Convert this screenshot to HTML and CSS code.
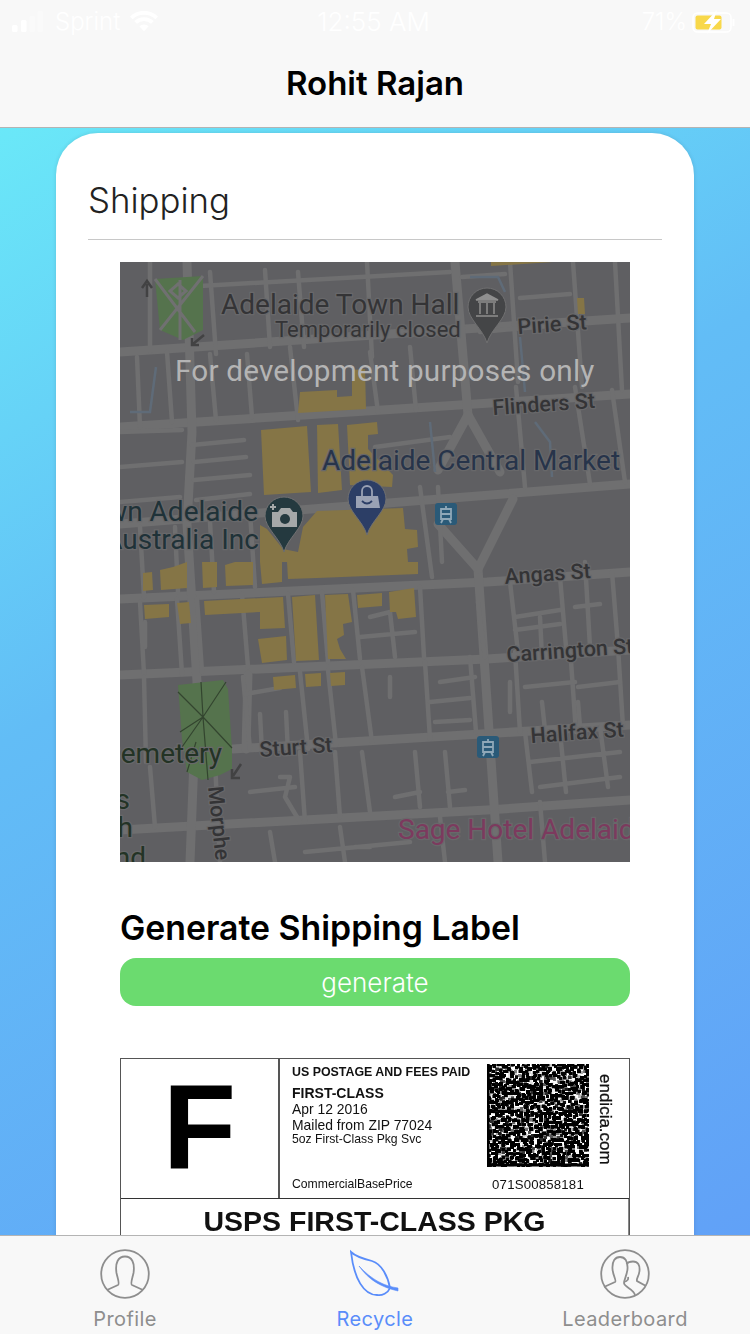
FILE: index.html
```html
<!DOCTYPE html>
<html lang="en">
<head>
<meta charset="utf-8">
<title>Shipping</title>
<link rel="stylesheet" href="styles.css">
</head>
<body>
<div class="screen">
  <header class="topbar">
    <div class="status">
      <div class="status-left">
        <svg class="signal" width="34" height="24" viewBox="0 0 34 24"><rect x="1" y="15" width="5.500" height="7" rx="1.500" fill="#fff"/><rect x="10" y="10" width="5.500" height="12" rx="1.500" fill="#fff"/><rect x="18.500" y="6" width="5.500" height="16" rx="1.500" fill="#fff" opacity=".35"/><rect x="26.500" y="1" width="5.500" height="21" rx="1.500" fill="#fff" opacity=".35"/></svg>
        <span class="carrier">Sprint</span>
        <svg class="wifi" width="28" height="22" viewBox="0 0 30 22"><path d="M15 21 10 15.500a7.500 7.500 0 0 1 10 0zM7.500 13 4.500 10a15.500 15.500 0 0 1 21 0l-3 3a11 11 0 0 0-15 0zM2.800 8 0 5a22 22 0 0 1 30 0l-2.800 3a18 18 0 0 0-24.400 0z" fill="#fff"/></svg>
      </div>
      <span class="clock">12:55 AM</span>
      <div class="status-right">
        <span class="percent">71%</span>
        <svg class="battery" width="44" height="24" viewBox="0 0 44 24"><rect x="1" y="3" width="38" height="19" rx="4.500" fill="none" stroke="#fff" stroke-width="1.500"/><rect x="3.500" y="5.500" width="26" height="14" rx="2" fill="#f8d84a"/><path d="M41.500 9v7" stroke="#fff" stroke-width="2"/><path d="M25 0 12 14h7l-4 10 14-15h-7z" fill="#fff"/></svg>
      </div>
    </div>
    <h1 class="nav-title">Rohit Rajan</h1>
  </header>

  <main class="content">
    <section class="card">
      <h2 class="card-title">Shipping</h2>
      <div class="card-body">
        <svg class="map" width="510" height="600" viewBox="0 0 510 600" role="img" aria-label="Map of central Adelaide">
          <defs>
            <path id="pin" d="M-19 0A19 19 0 1 1 19 0C19 12 4 22 0 36C-4 22-19 12-19 0Z"/>
            <clipPath id="mapclip"><rect width="510" height="600"/></clipPath>
          </defs>
          <g clip-path="url(#mapclip)">
          <rect class="m-ground" width="510" height="600"/>
          <g class="m-road m-major">
            <path d="M0 90 510 56M0 165 510 132M0 262 510 222M0 337 367 320 510 310M0 413 367 397 510 388M113 487 510 463M0 568 367 548 510 538"/>
            <path d="M67 0 72 170 67 262 77 420 70 600M335 0 348 153M358 307 378 600M128 413 126 487"/>
            <path d="M348 153 318 208M348 153 380 210M318 262 358 307M393 237 358 307"/>
          </g>
          <g class="m-road m-minor">
            <path d="M30 0 30 90M90 10 96 92M145 8 150 85M178 10 184 85M247 0 252 95M390 0 398 120M453 0 462 125M495 0 502 128"/>
            <path d="M17 95 20 165M47 90 52 160M90 92 96 158M127 92 132 155M170 85 178 158M250 90 258 150M290 85 296 148M396 125 405 225M455 125 470 222M492 128 505 220"/>
            <path d="M0 170 62 168M0 205 62 200M72 183 124 178M74 200 126 195M74 218 130 213M0 240 60 235M76 238 130 232M80 24 330 10M342 15 385 12M360 70 450 62M400 36 450 32M255 185 330 175"/>
            <path d="M20 265 24 335M55 265 58 330M90 260 94 330M130 250 135 325M300 225 312 315M318 225 322 300"/>
            <path d="M20 340 24 412M57 337 62 412M77 337 82 410M122 332 128 405M168 332 174 400M202 330 208 400M233 328 240 397M300 325 304 395M250 355 270 350M240 375 295 370M270 350 275 395"/>
            <path d="M358 340 365 395M390 320 398 390M440 315 446 385M492 310 498 385M395 355 440 348M395 368 440 362M455 345 480 342M465 300 470 385"/>
            <path d="M24 415 26 500M123 415 130 487M180 410 188 487M208 408 216 483M242 405 252 480M305 400 310 477M350 395 356 470M395 390 400 470M450 385 456 470M498 385 503 465"/>
            <path d="M140 452 142 490M166 450 168 490M270 415 270 435M25 360 25 385M420 355 422 395M390 420 390 450M422 440 425 468M458 440 460 465M125 432 160 426M405 425 455 420M458 425 500 420M320 420 355 415M310 440 350 436M315 460 350 458"/>
            <path d="M30 505 35 565M95 500 100 600M180 490 185 560M215 490 220 555M242 490 250 550M295 490 300 545M325 490 330 545M405 470 412 530M440 470 446 530M480 465 488 525M130 530 175 525M160 515 170 515 165 535 180 560M275 535 300 530M328 530 345 528M410 500 500 490M420 525 500 515"/>
            <path d="M150 570 155 600M220 565 225 600M320 555 325 600M420 540 425 600M185 590 290 580M235 585 250 585"/>
          </g>
          <g class="m-water">
            <path d="M10 150H30L36 105M350 15H378L385 30M400 75 405 130M415 160 430 180 432 215M310 160 315 210"/>
          </g>
          <g class="m-building">
            <path d="M180 130 217 128 217 135 232 134 232 108 245 107 246 147 178 151Z"/>
            <path d="M141 168 187 164 191 230 144 233Z"/>
            <path d="M197 163 218 162 222 228 198 231Z"/>
            <path d="M227 163 257 160 258 172 248 173 248 187 273 213 272 225 230 223Z"/>
            <path d="M197 249 283 246 285 267 297 268 298 285 287 287 288 300 140 300 140 263 147 267 163 287 178 290 183 265Z"/>
            <path d="M167 300 298 300 298 312 197 316 168 317Z"/>
            <path d="M140 300 162 300 162 320 142 322Z"/>
            <path d="M105 303 115 300 133 300 133 323 106 324Z"/>
            <path d="M82 300 97 300 97 325 83 326Z"/>
            <path d="M40 308 53 305 67 300 67 326 41 328Z"/>
            <path d="M23 311 32 310 33 328 23 329Z"/>
            <path d="M24 343 49 342 49 355 25 357Z"/>
            <path d="M57 341 69 340 71 361 60 362Z"/>
            <path d="M84 339 163 335 165 366 140 367 140 350 85 353Z"/>
            <path d="M138 377 166 374 167 398 142 401Z"/>
            <path d="M172 335 195 333 199 398 176 399Z"/>
            <path d="M205 333 228 332 232 360 223 362 224 373 217 377 220 387 226 397 208 397Z"/>
            <path d="M237 333 262 331 262 344 238 346Z"/>
            <path d="M269 330 294 326 296 355 278 357 276 350 270 350Z"/>
            <path d="M153 415 175 413 176 426 154 428Z"/>
            <path d="M185 412 201 411 201 424 186 425Z"/>
            <path d="M210 411 225 410 225 423 211 424Z"/>
            <path d="M371 0 433 0 371 4Z"/>
            <path d="M457 36 464 36 465 52 458 52Z"/>
          </g>
          <path class="m-park" d="M35 17 83 14 83 68 63 78 40 68Z"/>
          <path class="m-park-line" d="M35 17 75 70M83 14 40 68M60 18V78M58 22 66 29 58 36 50 29Z"/>
          <path class="m-park" d="M58 423 103 418 108 427 112 487 112 507 100 513 82 518 67 510 62 477Z"/>
          <path class="m-park-dark" d="M58 430 83 455 112 486M106 420 83 455 62 485M81 420 83 455 88 518M60 470 83 455M67 510 76 480"/>
          <path class="m-arrow" d="M27 35V22M22 26 27 19 32 26"/>
          <path class="m-arrow" d="M84 73 73 82M72 76V83H79"/>
          <path class="m-arrow" d="M121 502 113 514M112 507V516H120"/>
          <use href="#pin" x="367" y="45" class="p-grey"/>
          <use href="#pin" x="164" y="254" class="p-teal"/>
          <use href="#pin" x="247" y="237" class="p-navy"/>
          <path class="p-glyph-light" d="M356 38H378L367 32ZM358 40H376M360 41V52M367 41V52M374 41V52M356 54H378"/>
          <path class="p-fill-light" d="M152 250H158L161 246H170L173 250H177V265H152Z"/>
          <path class="p-plus" d="M150 245H156M153 242V248"/>
          <circle class="p-dot" cx="165" cy="257" r="5"/>
          <path class="p-fill-light2" d="M236 234H258L260 246H236Z"/>
          <path class="p-bag-line" d="M242 234V229A5 5 0 0 1 252 229V234"/>
          <path class="p-bag-smile" d="M242 239Q247 244 252 239"/>
          <rect class="m-transit" x="315" y="241" width="22" height="22" rx="3"/>
          <rect class="m-transit" x="357" y="474" width="22" height="22" rx="3"/>
          <path class="m-transit-line" d="M321 247H331V257H321ZM321 252H331M323 257 321 261M329 257 331 261M326 244V247"/>
          <path class="m-transit-line" d="M363 480H373V490H363ZM363 485H373M365 490 363 494M371 490 373 494M368 477V480"/>
          <g class="m-label">
            <text class="t-lg" x="101" y="52">Adelaide Town Hall</text>
            <text class="t-sm" x="155" y="75">Temporarily closed</text>
            <text class="t-st" x="398" y="72" transform="rotate(-4 398 72)">Pirie St</text>
            <text class="t-st" x="373" y="153" transform="rotate(-4 373 153)">Flinders St</text>
            <text class="t-st" x="385" y="322" transform="rotate(-4 385 322)">Angas St</text>
            <text class="t-st" x="387" y="400" transform="rotate(-4 387 400)">Carrington St</text>
            <text class="t-st" x="411" y="481" transform="rotate(-4 411 481)">Halifax St</text>
            <text class="t-st" x="140" y="495" transform="rotate(-4 140 495)">Sturt St</text>
            <text class="t-lg t-navy" x="202" y="208">Adelaide Central Market</text>
            <text class="t-lg t-teal" x="138" y="259" text-anchor="end">Town Adelaide</text>
            <text class="t-lg t-teal" x="139" y="287" text-anchor="end">Australia Inc</text>
            <text class="t-lg t-green" x="102" y="501" text-anchor="end">Cemetery</text>
            <text class="t-lg t-green" x="10" y="547" text-anchor="end">s</text>
            <text class="t-lg t-green" x="13" y="575" text-anchor="end">h</text>
            <text class="t-lg t-green" x="26" y="605" text-anchor="end">nd</text>
            <text class="t-st" x="88" y="525" transform="rotate(84 88 525)">Morphe</text>
            <text class="t-lg t-plum" x="278" y="577">Sage Hotel Adelaide</text>
          </g>
          <text class="t-dev" x="55" y="119">For development purposes only</text>
          </g>
        </svg>

        <h3 class="gen-title">Generate Shipping Label</h3>
        <button class="gen-btn" type="button">generate</button>

        <div class="label">
          <div class="label-top">
            <div class="label-letter">F</div>
            <div class="label-info">
              <div class="info-text">
                <div class="info-paid">US POSTAGE AND FEES PAID</div>
                <div class="info-class">FIRST-CLASS</div>
                <div class="info-line">Apr 12 2016</div>
                <div class="info-line">Mailed from ZIP 77024</div>
                <div class="info-small">5oz First-Class Pkg Svc</div>
                <div class="info-price">CommercialBasePrice</div>
              </div>
              <div class="info-code">
                <svg class="matrix" width="102" height="103" viewBox="0 0 102 103">
                  <defs>
                    <filter id="noise" x="0" y="0" width="100%" height="100%" filterUnits="objectBoundingBox" color-interpolation-filters="sRGB">
                      <feTurbulence type="fractalNoise" baseFrequency="0.45" numOctaves="1" seed="11" result="n"/>
                      <feColorMatrix in="n" values="0 0 0 0 0  0 0 0 0 0  0 0 0 0 0  12 0 0 0 -6.600" result="t"/>
                      <feFlood x="0" y="0" width="1" height="1" flood-color="#000" result="d"/>
                      <feTile in="d" x="0" y="0" width="2" height="2"/>
                      <feTile x="0" y="0" width="102" height="103" result="g"/>
                      <feComposite in="t" in2="g" operator="in"/>
                      <feMorphology operator="dilate" radius="1"/>
                    </filter>
                  </defs>
                  <rect width="102" height="103" fill="#fff"/>
                  <rect width="102" height="103" filter="url(#noise)"/>
                  <path d="M1 0V103M0 101H102" stroke="#000" stroke-width="3" fill="none"/>
                  <path d="M0 1H102M101 0V103" stroke="#000" stroke-width="2.500" stroke-dasharray="2.500 2.500" fill="none"/>
                </svg>
                <div class="code-num">071S00858181</div>
              </div>
              <div class="info-brand">endicia.com</div>
            </div>
          </div>
          <div class="label-service">USPS FIRST-CLASS PKG</div>
        </div>
      </div>
    </section>
  </main>

  <nav class="tabbar">
    <div class="tab">
      <svg class="tab-icon" width="50" height="50" viewBox="0 0 50 50" fill="none" stroke="#8e8e8e" stroke-width="1.800"><circle cx="25" cy="25" r="23.800"/><path d="M7 41 18 36C20 35 17.500 29 16.500 24 15 14 18 7.500 25 7.500S35 14 33.500 24C32.500 29 30 35 32 36L43 41"/></svg>
      <span class="tab-name">Profile</span>
    </div>
    <div class="tab tab-active">
      <svg class="tab-icon" width="50" height="50" viewBox="0 0 50 50" fill="none" stroke="#5a8dfa" stroke-width="1.800"><path d="M1 3C6 8 14 10 22 12 32 15 38 28 40 39 38 44 32 47 27 46 14 46 4 30 1 3Z"/><path d="M9 17C18 30 30 38 48 42L48 39C34 37 22 31 9 17Z" fill="#5a8dfa" stroke-width=".6"/></svg>
      <span class="tab-name">Recycle</span>
    </div>
    <div class="tab">
      <svg class="tab-icon" width="50" height="50" viewBox="0 0 50 50" fill="none" stroke="#8e8e8e" stroke-width="1.800"><circle cx="25" cy="25" r="23.800"/><path d="M4 38 15 33C17 32 13 27 12.500 20 12 12 15 8 20 8S28 12 27.500 20C27 26 24 31 24 34 24 38 34 40 35 46"/><path d="M26.500 15C28 13 30 12.500 33 12.500 38 12.500 40 16 39.500 22 39 27 36 30 37 32L46 37M24 33C28 32 28.500 30 28 28"/></svg>
      <span class="tab-name">Leaderboard</span>
    </div>
  </nav>
</div>
</body>
</html>
```

FILE: styles.css
```css
* { box-sizing: border-box; }
html, body { margin: 0; padding: 0; }
body { width: 750px; height: 1334px; overflow: hidden; font-family: Inter, "Liberation Sans", sans-serif; }
.screen { width: 750px; height: 1334px; display: flex; flex-direction: column; overflow: hidden; }

.topbar { flex: 0 0 128px; background: #f8f8f8; border-bottom: 1px solid #b4b4b4; }
.status { height: 40px; padding: 3px 14px 0 11px; display: grid; grid-template-columns: 1fr auto 1fr; align-items: center; color: #fff; font-size: 24px; font-weight: 300; }
.status-left { display: flex; align-items: center; gap: 10px; }
.clock { text-align: center; font-size: 26px; }
.status-right { display: flex; align-items: center; justify-content: flex-end; gap: 5px; }
.nav-title { margin: 0; height: 87px; display: flex; align-items: center; justify-content: center; padding-bottom: 2px; font-size: 33px; font-weight: 600; color: #000; }

.content { flex: 1; min-height: 0; overflow: hidden; padding: 5px 56px 0; background: linear-gradient(150deg, #6ae8f8 0%, #62bdf6 40%, #61a1f7 100%); }
.card { background: #fff; border-radius: 42px 42px 0 0; padding: 0 32px; height: 1400px; box-shadow: 0 0 4px rgba(0, 0, 0, .12); }
.card-title { margin: 0; height: 107px; padding: 46px 0 0; border-bottom: 1px solid #c8c8c8; font-size: 34.800px; font-weight: 300; line-height: 42px; color: #222; }
.card-body { padding: 22px 32px 0; }
.map { display: block; }

.m-ground { fill: #5f5f62; }
.m-road { fill: none; stroke: #6f6f70; stroke-linecap: round; stroke-linejoin: round; }
.m-major { stroke-width: 9; }
.m-minor { stroke-width: 4.500; }
.m-water { fill: none; stroke: #5f6b78; stroke-width: 2.500; }
.m-building { fill: #857546; }
.m-park { fill: #55734d; }
.m-park-line { fill: none; stroke: #707071; stroke-width: 3; }
.m-park-dark { fill: none; stroke: #33452f; stroke-width: 1.200; }
.m-arrow { fill: none; stroke: #424243; stroke-width: 2.500; }
.p-grey { fill: #444547; stroke: #707071; stroke-width: 1; }
.p-teal { fill: #24393f; stroke: #707071; stroke-width: 1; }
.p-navy { fill: #2c3e66; stroke: #707071; stroke-width: 1; }
.p-glyph-light { fill: #8f8f8f; stroke: #8f8f8f; stroke-width: 1.500; }
.p-fill-light { fill: #a5a8a9; }
.p-plus { fill: none; stroke: #a5a8a9; stroke-width: 2; }
.p-dot { fill: #24393f; }
.p-fill-light2 { fill: #9aa2b5; }
.p-bag-line { fill: none; stroke: #9aa2b5; stroke-width: 1.800; }
.p-bag-smile { fill: none; stroke: #2c3e66; stroke-width: 1.800; }
.m-transit { fill: #2a5a78; }
.m-transit-line { fill: none; stroke: #8fa8b8; stroke-width: 1.800; }
.m-label text { font-family: Roboto, sans-serif; fill: #343436; stroke: #68686a; stroke-width: 2.500; paint-order: stroke; }
.m-label .t-lg { font-size: 28px; }
.m-label .t-sm { font-size: 22px; }
.m-label .t-st { font-size: 21.500px; font-weight: 500; }
.m-label .t-navy { fill: #27344a; }
.m-label .t-teal { fill: #1f3238; }
.m-label .t-green { fill: #233325; }
.m-label .t-plum { fill: #7c3a5e; }
.t-dev { font-family: Roboto, sans-serif; font-size: 29.700px; fill: #b4b4b4; letter-spacing: .2px; }

.gen-title { margin: 47px 0 0; height: 38px; font-size: 33.800px; line-height: 38px; font-weight: 600; color: #000; white-space: nowrap; }
.gen-btn { display: block; width: 100%; height: 48px; margin: 11px 0 0; padding: 0; border: 0; border-radius: 16px; background: #6bdb6f; color: #fff; font-family: inherit; font-size: 26px; font-weight: 300; }

.label { margin-top: 52px; border: 1px solid #555; border-bottom: 0; font-family: "Liberation Sans", Arial, sans-serif; color: #111; }
.label-top { height: 140px; display: flex; border-bottom: 1px solid #333; }
.label-letter { flex: 0 0 159px; padding-bottom: 6px; border-right: 2px solid #555; text-align: center; font-size: 120px; line-height: 134px; font-weight: 700; color: #000; filter: blur(.4px); }
.label-info { flex: 1; display: flex; padding: 5px 0 0 12px; filter: blur(.3px); }
.info-text { width: 195px; display: flex; flex-direction: column; }
.info-paid { font-size: 12.400px; font-weight: 700; line-height: 16px; white-space: nowrap; }
.info-class { font-size: 14px; font-weight: 700; line-height: 16px; margin-top: 5px; }
.info-line { font-size: 13.900px; line-height: 15.500px; white-space: nowrap; }
.info-class + .info-line { margin-top: 1px; }
.info-small { font-size: 12.200px; line-height: 14px; margin-top: -1px; white-space: nowrap; }
.info-price { font-size: 12.200px; line-height: 14px; margin-top: 31px; white-space: nowrap; }
.info-code { width: 102px; display: flex; flex-direction: column; align-items: center; }
.matrix { display: block; flex: none; }
.code-num { font-size: 13.200px; line-height: 14px; margin-top: 11px; white-space: nowrap; letter-spacing: .2px; }
.info-brand { writing-mode: vertical-rl; font-size: 17px; font-weight: 400; margin: 10px 0 0 8px; height: 96px; line-height: 16px; white-space: nowrap; -webkit-text-stroke: .3px #111; }
.label-service { height: 60px; border-right: 1px solid #888; text-align: center; font-size: 28.500px; font-weight: 700; line-height: 44px; color: #111; filter: blur(.3px); }

.tabbar { flex: 0 0 99px; position: relative; z-index: 1; background: #f8f8f8; border-top: 1px solid #b4b4b4; display: grid; grid-template-columns: repeat(3, 1fr); }
.tab { display: flex; flex-direction: column; align-items: center; padding-top: 13px; }
.tab-icon { display: block; flex: none; }
.tab-name { margin-top: 8px; font-size: 20px; line-height: 24px; font-weight: 400; color: #8e8e8e; letter-spacing: .4px; }
.tab-active .tab-name { color: #5a8dfa; }
```
